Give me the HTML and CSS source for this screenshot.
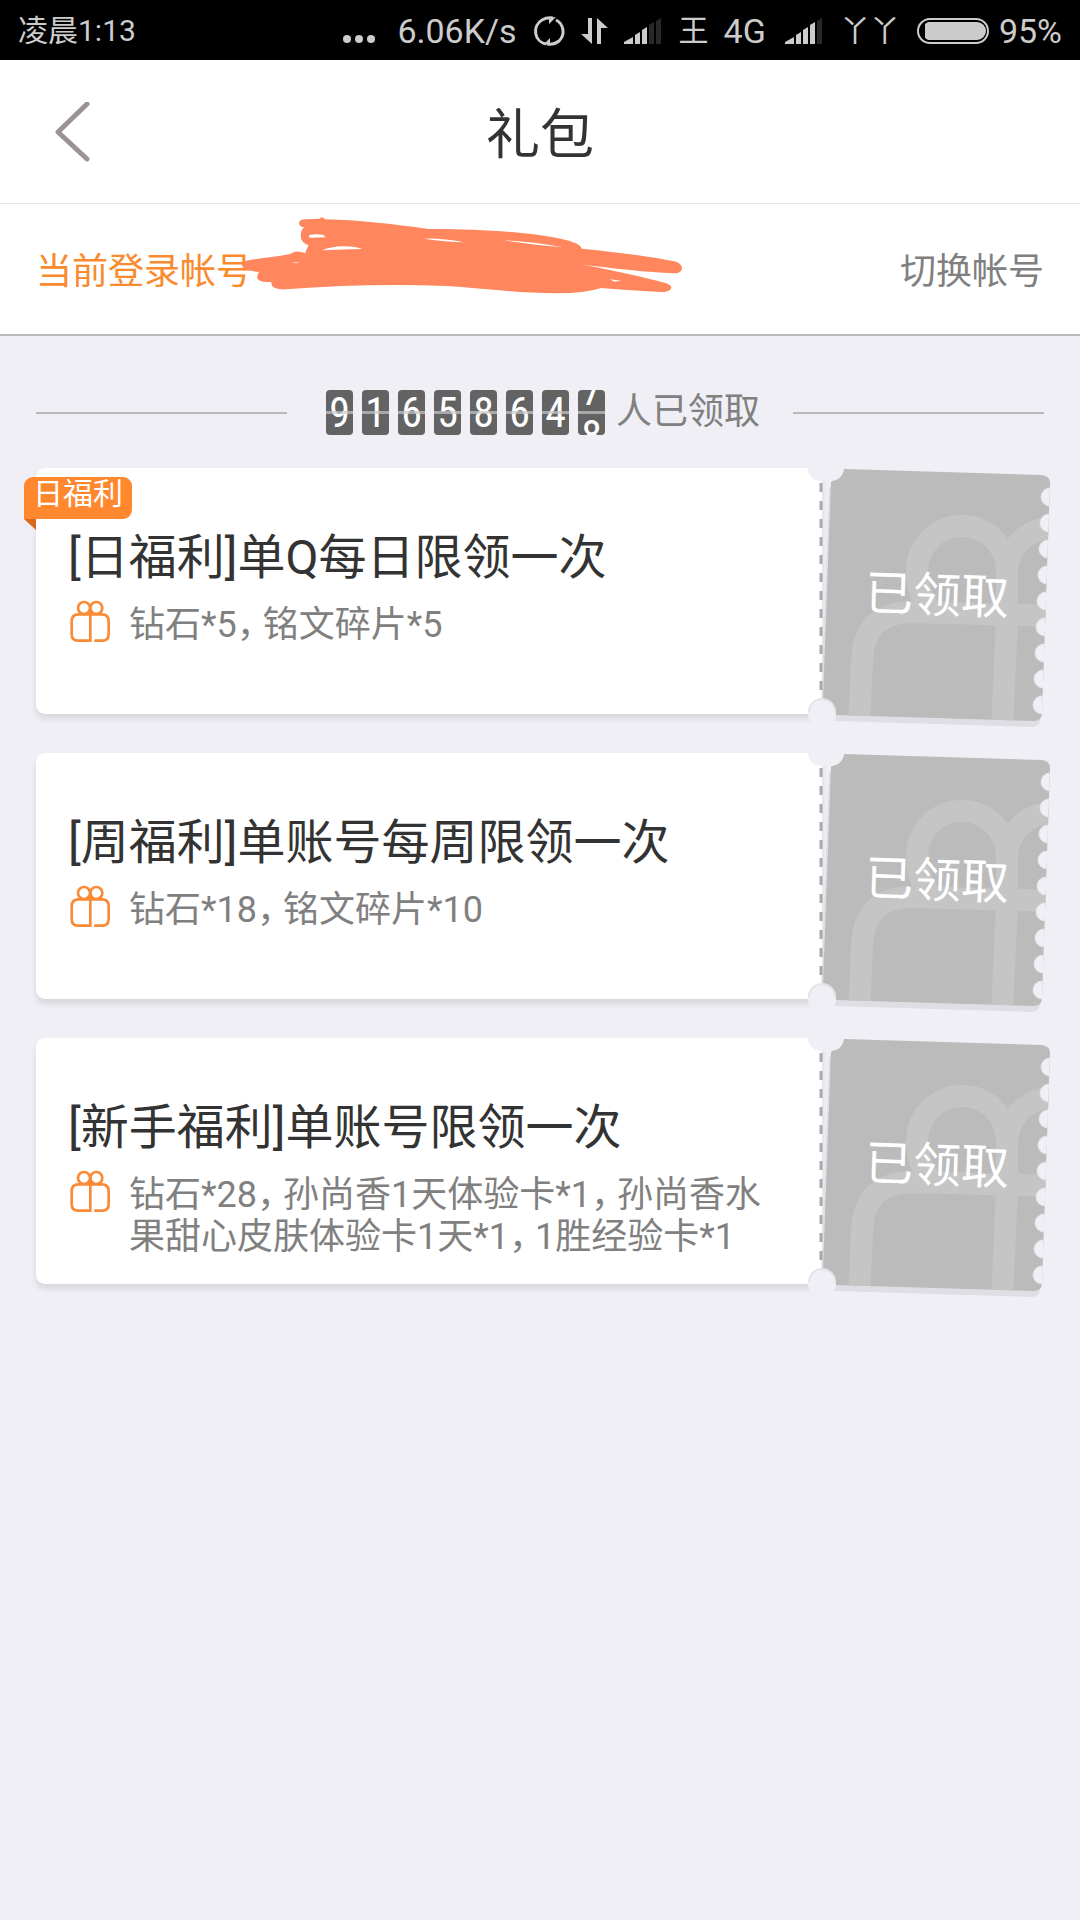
FILE: index.html
```html
<!DOCTYPE html>
<html lang="zh-CN">
<head>
<meta charset="utf-8">
<meta name="viewport" content="width=device-width, initial-scale=1">
<title>礼包</title>
<link rel="stylesheet" href="styles.css">
</head>
<body>
<svg class="defs" width="0" height="0" aria-hidden="true">
  <defs>
    <symbol id="gift" viewBox="54 30 132 129">
      <g fill="none" stroke="#fa8a35" stroke-width="8" stroke-linecap="round">
        <circle cx="102" cy="54" r="18"/>
        <circle cx="139" cy="54" r="18"/>
        <path d="M121 56V152H84Q65 152 65 132V94Q65 73 86 73H155Q176 73 176 94V132Q176 152 157 152H136"/>
      </g>
    </symbol>
    <path id="stub" d="M36 1L234 7Q242 8 242 15L234 246Q233 253 226 253L28 247L15 232L23 14Z"/>
    <clipPath id="stub-clip"><use href="#stub"/></clipPath>
    <symbol id="ticket" viewBox="0 0 243 262">
      <use href="#stub" fill="#dedee5" transform="translate(-2 6)"/>
      <use href="#stub" fill="#bbbbbb"/>
      <g clip-path="url(#stub-clip)" fill="none" stroke="#c5c5c5" stroke-width="22">
        <path d="M130 148Q109 132 109 103A45 45 0 0 1 199 103V148L194 262M199 148V105A45 45 0 0 1 289 105"/>
        <path d="M51 262L54 192Q56 144 105 144L250 148"/>
      </g>
      <g fill="#efeff5" stroke="#e3e3e9" stroke-width="1" clip-path="url(#stub-clip)">
        <circle cx="242" cy="29" r="9"/><circle cx="241" cy="55" r="9"/><circle cx="240" cy="81" r="9"/>
        <circle cx="239" cy="107" r="9"/><circle cx="238" cy="133" r="9"/><circle cx="237" cy="159" r="9"/>
        <circle cx="236" cy="185" r="9"/><circle cx="235" cy="211" r="9"/><circle cx="234" cy="237" r="9"/>
      </g>
      <path d="M13 15V235" stroke="#a9a9ab" stroke-width="3" stroke-dasharray="9 9"/>
      <path d="M0 0A13 13 0 0 0 13 13H23A13 13 0 0 0 36 0Z" fill="#efeff5"/>
      <circle cx="14" cy="246" r="14" fill="#efeff5"/>
      <path d="M1 244A13 13 0 0 1 27 244" fill="none" stroke="#e4e4ea" stroke-width="2"/>
    </symbol>
  </defs>
</svg>

<div class="status">
  <span class="status-time">凌晨1:13</span>
  <div class="status-info">
    <svg width="40" height="30" viewBox="0 0 40 30" fill="#cccccc"><circle cx="5" cy="23" r="4"/><circle cx="17" cy="23" r="4"/><circle cx="29" cy="23" r="4"/></svg>
    <span>6.06K/s</span>
    <svg width="34" height="32" viewBox="0 0 34 32"><g fill="none" stroke="#cccccc" stroke-width="3"><path d="M14 29A13 13 0 0 1 10 5Q15 2 21 3"/><path d="M24 5A13 13 0 0 1 27 26Q22 30 15 29"/></g><path d="M24 2L17 9V3ZM11 30L18 23V29Z" fill="#cccccc"/></svg>
    <svg width="28" height="28" viewBox="0 0 28 28" fill="#cccccc"><path d="M7 1H11V27L0 17H7ZM16 27H20V11H27L16 1Z"/></svg>
    <svg width="40" height="26" viewBox="0 0 40 26"><path d="M0 26V24L9 19V26ZM11 26V17L16 14V26ZM18 26V12L23 9V26Z" fill="#cccccc"/><path d="M25 26V7L30 4V26ZM32 26V3L37 0V26Z" fill="#292929"/></svg>
    <span class="carrier">王</span>
    <span>4G</span>
    <svg width="44" height="26" viewBox="-4 0 44 26"><path d="M0 26V24L9 19V26ZM11 26V17L16 14V26ZM18 26V12L23 9V26ZM25 26V7L30 4V26Z" fill="#cccccc"/><path d="M32 26V3L37 0V26Z" fill="#292929"/></svg>
    <span class="carrier">丫丫</span>
    <div class="battery">
      <svg width="76" height="28" viewBox="0 0 76 28"><rect x="3" y="2" width="70" height="24" rx="12" fill="none" stroke="#cccccc" stroke-width="2"/><path d="M13 5H62A9 9 0 0 1 62 23H13L10 21V7Z" fill="#cccccc"/></svg>
      <span>95%</span>
    </div>
  </div>
</div>

<header class="topbar">
  <button class="back" type="button" aria-label="返回">
    <svg width="36" height="60" viewBox="0 0 36 60"><path d="M33 2L4 30L33 57" fill="none" stroke="#9b9294" stroke-width="5" stroke-linecap="round" stroke-linejoin="round"/></svg>
  </button>
  <h1>礼包</h1>
</header>

<section class="account">
  <span class="account-label">当前登录帐号</span>
  <a class="account-switch" href="#">切换帐号</a>
  <svg class="scribble" viewBox="540 80 1000 240" preserveAspectRatio="none" aria-hidden="true">
    <path fill="#ff865d" d="M670 100Q672 88 690 90L716 88Q722 78 728 90C800 92 880 104 960 119C1060 118 1180 128 1240 144Q1300 158 1304 178C1380 188 1460 202 1512 216Q1528 222 1529 238Q1526 252 1510 252C1450 248 1380 238 1308 226C1370 242 1440 262 1490 280Q1508 288 1504 298Q1500 308 1480 308C1430 304 1380 300 1348 296Q1310 312 1250 312C1160 312 1080 296 1000 290C880 284 760 288 640 300Q606 302 608 278Q576 280 576 264L580 247Q545 246 542 228Q542 216 560 212C600 204 630 200 650 194Q664 180 684 192Q686 180 692 168Q674 160 674 140Q674 120 682 114Q670 112 670 100Z"/>
    <path fill="#ffffff" d="M692 140Q692 135 708 135L724 136L730 144L694 145ZM722 183Q740 172 770 171Q800 172 812 179Q770 180 722 183ZM950 148Q990 146 1040 159Q1000 158 950 148ZM1130 153Q1190 156 1262 174Q1190 166 1130 153ZM1366 270L1392 274L1378 277ZM652 220L672 219L664 222Z"/>
  </svg>
</section>

<main>
  <div class="counter">
    <div class="counter-body">
      <div class="digits">
        <span class="digit">9</span><span class="digit">1</span><span class="digit">6</span><span class="digit">5</span><span class="digit">8</span><span class="digit">6</span><span class="digit">4</span><span class="digit digit-rolling"><span>7</span><span>8</span></span>
      </div>
      <span>人已领取</span>
    </div>
  </div>

  <ul class="coupons">
    <li class="coupon">
      <span class="ribbon">日福利</span>
      <div class="coupon-body">
        <h2>[日福利]单Q每日限领一次</h2>
        <div class="reward">
          <svg class="gift"><use href="#gift"/></svg>
          <p>钻石*5<span class="comma">，</span>铭文碎片*5</p>
        </div>
      </div>
      <button class="ticket" type="button">
        <svg class="ticket-art"><use href="#ticket"/></svg>
        <span class="ticket-text">已领取</span>
      </button>
    </li>
    <li class="coupon">
      <div class="coupon-body">
        <h2>[周福利]单账号每周限领一次</h2>
        <div class="reward">
          <svg class="gift"><use href="#gift"/></svg>
          <p>钻石*18<span class="comma">，</span>铭文碎片*10</p>
        </div>
      </div>
      <button class="ticket" type="button">
        <svg class="ticket-art"><use href="#ticket"/></svg>
        <span class="ticket-text">已领取</span>
      </button>
    </li>
    <li class="coupon">
      <div class="coupon-body">
        <h2>[新手福利]单账号限领一次</h2>
        <div class="reward">
          <svg class="gift"><use href="#gift"/></svg>
          <p>钻石*28<span class="comma">，</span>孙尚香1天体验卡*1<span class="comma">，</span>孙尚香水果甜心皮肤体验卡1天*1<span class="comma">，</span>1胜经验卡*1</p>
        </div>
      </div>
      <button class="ticket" type="button">
        <svg class="ticket-art"><use href="#ticket"/></svg>
        <span class="ticket-text">已领取</span>
      </button>
    </li>
  </ul>
</main>
</body>
</html>
```

FILE: styles.css
```css
* {
  box-sizing: border-box;
}

body {
  margin: 0;
  min-height: 100vh;
  background: #efeff5;
  color: #333333;
  font-family: Roboto, "Noto Sans CJK SC", sans-serif;
  font-size: 36px;
  font-weight: 400;
}

h1, h2, p, ul {
  margin: 0;
  padding: 0;
  font-weight: inherit;
}

button {
  padding: 0;
  border: 0;
  background: none;
  color: inherit;
  font: inherit;
}

svg {
  display: block;
  flex: none;
}

.defs {
  position: absolute;
}

/* Status bar */
.status {
  display: flex;
  align-items: center;
  justify-content: space-between;
  height: 60px;
  padding: 2px 18px 0;
  background: #000000;
  color: #cccccc;
  font-size: 34px;
  line-height: 58px;
  white-space: nowrap;
}

.status-time {
  font-size: 30px;
}

.status-info {
  display: flex;
  align-items: center;
  gap: 15px;
}

.carrier {
  font-size: 30px;
}

.battery {
  display: flex;
  align-items: center;
  gap: 8px;
}

/* Title bar */
.topbar {
  display: grid;
  grid-template-columns: 1fr auto 1fr;
  align-items: center;
  height: 144px;
  padding: 0 54px;
  border-bottom: 1px solid #e6e6e6;
  background: #ffffff;
}

.back {
  justify-self: start;
}

.topbar h1 {
  padding-top: 8px;
  font-size: 54px;
  line-height: 60px;
}

/* Account row */
.account {
  position: relative;
  display: flex;
  align-items: center;
  justify-content: space-between;
  height: 132px;
  padding: 0 36px 2px;
  border-bottom: 2px solid #b9b9bc;
  background: #ffffff;
}

.account-label {
  color: #f98a2e;
}

.account-switch {
  color: #808080;
  text-decoration: none;
}

.scribble {
  position: absolute;
  top: 12px;
  left: 241px;
  width: 446px;
  height: 80px;
}

/* Claimed counter */
.counter {
  display: flex;
  align-items: center;
  padding: 54px 36px 33px;
  color: #808080;
}

.counter::before,
.counter::after {
  flex: 1;
  height: 2px;
  background: #b9b9bc;
  content: "";
}

.counter-body {
  display: flex;
  align-items: center;
  gap: 11px;
  margin: 0 33px 0 39px;
  line-height: 45px;
}

.digits {
  display: flex;
  gap: 9px;
}

.digit {
  position: relative;
  width: 27px;
  height: 45px;
  overflow: hidden;
  border-radius: 4px;
  background: #636363;
  color: #ffffff;
  font-family: "Liberation Sans Narrow", "Roboto Condensed", Roboto, sans-serif;
  font-size: 42px;
  text-align: center;
}

.digit::after {
  position: absolute;
  top: 21px;
  left: 0;
  width: 100%;
  height: 3px;
  background: rgba(200, 200, 200, 0.7);
  content: "";
}

.digit-rolling span {
  display: block;
}

.digit-rolling span:first-child {
  margin-top: -22px;
}

/* Coupons */
.coupons {
  display: flex;
  flex-direction: column;
  gap: 39px;
  padding: 0 29px 39px 36px;
  list-style: none;
}

.coupon {
  position: relative;
  display: flex;
  align-items: flex-start;
}

.coupon-body {
  flex: 1;
  min-width: 0;
  min-height: 246px;
  padding: 60px 32px 26px;
  border-radius: 9px 0 0 9px;
  background: #ffffff;
  box-shadow: 0 5px 6px rgba(0, 0, 0, 0.1);
}

.coupon h2 {
  font-size: 48px;
  line-height: 60px;
}

.reward {
  display: flex;
  gap: 17px;
  margin-top: 12px;
  color: #808080;
}

.reward p {
  padding-top: 4px;
  line-height: 42px;
}

.comma {
  margin-right: 8px;
  font-feature-settings: "halt";
}

.gift {
  width: 44px;
  height: 43px;
}

.ribbon {
  position: absolute;
  top: 9px;
  left: -12px;
  padding: 0 9px 8px;
  border-radius: 9px 9px 9px 0;
  background: #ff872e;
  color: #ffffff;
  font-size: 30px;
  line-height: 34px;
}

.ribbon::after {
  position: absolute;
  top: 100%;
  left: 0;
  border-top: 11px solid #d96a1c;
  border-left: 12px solid transparent;
  content: "";
}

.ticket {
  position: relative;
  display: grid;
  place-items: center;
  margin: 0 0 -16px -14px;
}

.ticket-art,
.ticket-text {
  grid-area: 1 / 1;
}

.ticket-art {
  width: 243px;
  height: 262px;
}

.ticket-text {
  padding: 0 0 6px 16px;
  color: #ffffff;
  font-size: 48px;
  line-height: 60px;
  transform: rotate(2deg);
}
```
